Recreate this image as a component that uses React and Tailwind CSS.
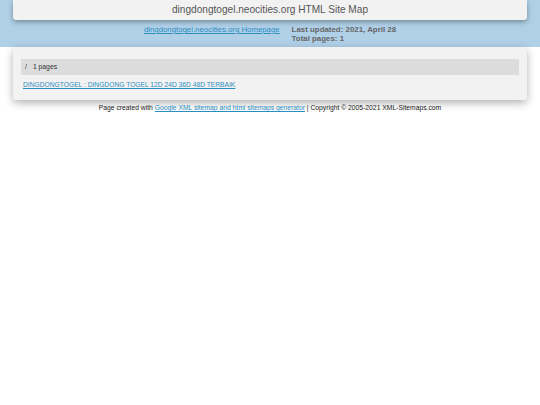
export default function App() {
  return (
    <div className="min-h-screen bg-white font-['Liberation_Sans',Arial,sans-serif]">
      <div className="h-[47px] bg-[#b0d0e8] px-[13px]">
        <div className="flex h-[20px] items-center justify-center rounded-b-[3px] bg-[#f2f2f2] shadow-[0_2px_5px_rgba(0,0,0,0.35)]">
          <h1 className="text-[10.1px] text-[#555]">dingdongtogel.neocities.org HTML Site Map</h1>
        </div>
        <div className="mt-[5px] flex justify-center gap-[12px] text-[7.9px] leading-[9px]">
          <a href="#" className="text-[7.8px] text-[#2a8cc0] underline">dingdongtogel.neocities.org Homepage</a>
          <div className="font-bold text-[#666]">
            <div>Last updated: 2021, April 28</div>
            <div>Total pages: 1</div>
          </div>
        </div>
      </div>
      <div className="mx-[13px] rounded-[3px] bg-[#f2f2f2] px-[8px] pt-[12px] pb-[11px] shadow-[0_3px_8px_rgba(0,0,0,0.3)]">
        <div className="flex h-[16px] items-center bg-[#dcdcdc] pl-[4px] text-[6.8px] text-[#333]">
          <span>/</span>
          <span className="ml-[6px]">1 pages</span>
        </div>
        <div className="mt-[5px] pl-[2px] text-[6.7px] leading-[9px]">
          <a href="#" className="text-[#2a8cc0] underline">DINGDONGTOGEL : DINGDONG TOGEL 12D 24D 36D 48D TERBAIK</a>
        </div>
      </div>
      <div className="mt-[3px] text-center text-[6.75px] text-[#222]">
        Page created with{" "}
        <a href="#" className="text-[#2a8cc0] underline">Google XML sitemap and html sitemaps generator</a>
        {" "}| Copyright © 2005-2021 XML-Sitemaps.com
      </div>
    </div>
  );
}
